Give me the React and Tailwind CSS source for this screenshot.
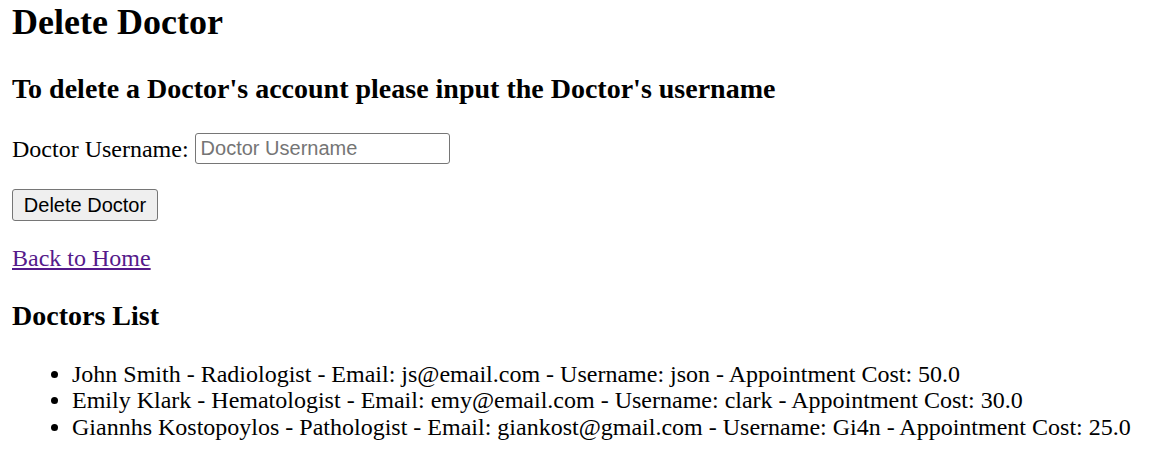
export default function App() {
  const doctors = [
    { name: 'John Smith', spec: 'Radiologist', email: 'js@email.com', username: 'json', cost: '50.0' },
    { name: 'Emily Klark', spec: 'Hematologist', email: 'emy@email.com', username: 'clark', cost: '30.0' },
    { name: 'Giannhs Kostopoylos', spec: 'Pathologist', email: 'giankost@gmail.com', username: 'Gi4n', cost: '25.0' },
  ];

  return (
    <div className="bg-white text-black px-[12px] pt-[2px] pb-[10px] text-[24px] font-['Liberation_Serif',serif]">
      <h1 className="text-[36px] font-bold leading-[41px] mb-[30px]">Delete Doctor</h1>
      <h3 className="text-[28px] font-bold leading-[32px] mb-[28px]">
        To delete a Doctor's account please input the Doctor's username
      </h3>

      <div className="flex items-center h-[31px] mb-[25px]">
        <label className="leading-[28px]">Doctor Username:</label>
        <input
          type="text"
          placeholder="Doctor Username"
          className="ml-[6px] w-[255px] h-[31px] border border-[#767676] rounded-[3px] px-[5px] text-[20px] font-['Liberation_Sans',sans-serif] placeholder:text-[#757575] outline-none"
        />
      </div>

      <button className="w-[146px] h-[32px] bg-[#efefef] border border-[#767676] rounded-[3px] text-[20px] font-['Liberation_Sans',sans-serif] flex items-center justify-center mb-[23px]">
        Delete Doctor
      </button>

      <a href="#" className="block w-fit leading-[28px] text-[#551a8b] underline mb-[28px]">Back to Home</a>

      <h3 className="text-[28px] font-bold leading-[32px] mb-[28.5px]">Doctors List</h3>

      <ul className="list-disc pl-[60px] leading-[26.5px]">
        {doctors.map(d => (
          <li key={d.username}>
            {d.name} - {d.spec} - Email: {d.email} - Username: {d.username} - Appointment Cost: {d.cost}
          </li>
        ))}
      </ul>
    </div>
  );
}
